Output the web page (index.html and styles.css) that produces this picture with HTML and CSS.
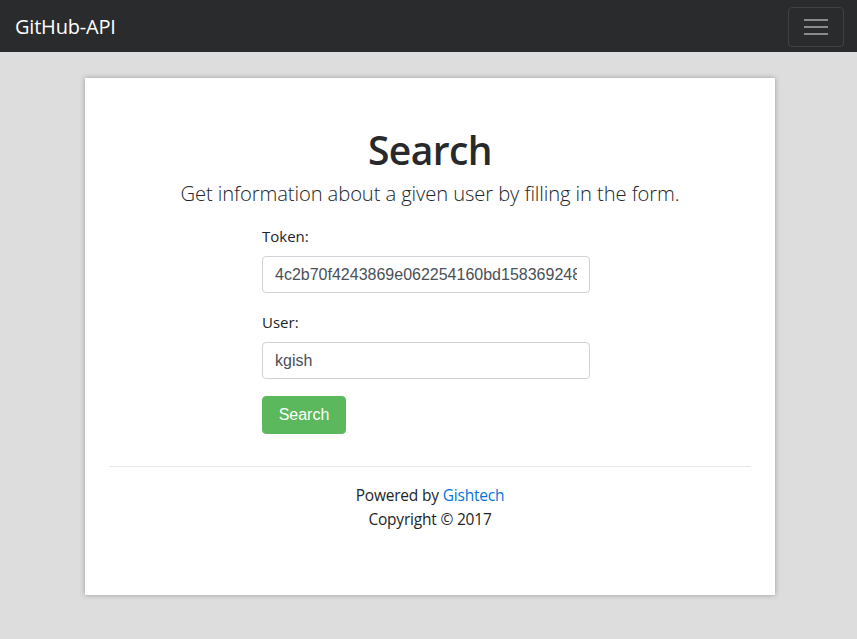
FILE: index.html
```html
<!DOCTYPE html>
<html>
<head>
<meta charset="utf-8">
<link rel="stylesheet" href="styles.css">
</head>
<body>
<nav class="navbar">
  <span class="brand">GitHub-API</span>
  <button class="toggler" type="button"><span class="bar"></span><span class="bar"></span><span class="bar"></span></button>
</nav>
<main class="card">
  <h1 class="title">Search</h1>
  <p class="lead">Get information about a given user by filling in the form.</p>
  <form class="form">
    <label class="label">Token:</label>
    <input class="input" type="text" value="4c2b70f4243869e062254160bd15836924812345">
    <label class="label">User:</label>
    <input class="input" type="text" value="kgish">
    <button class="btn" type="button">Search</button>
  </form>
  <hr class="rule">
  <footer class="footer">
    <div>Powered by <a class="link" href="#">Gishtech</a></div>
    <div>Copyright © 2017</div>
  </footer>
</main>
</body>
</html>
```
FILE: styles.css
```css
html, body {
  margin: 0;
  padding: 0;
  background: #dddddd;
  font-family: "Open Sans", "Noto Sans", sans-serif;
  color: #212529;
  height: 639px;
  overflow: hidden;
}
.navbar {
  height: 52px;
  background: #2a2b2d;
  display: flex;
  align-items: center;
  justify-content: space-between;
  padding: 0 13px 0 16px;
  box-sizing: border-box;
}
.brand {
  color: #ffffff;
  font-size: 20px;
  letter-spacing: -0.2px;
  margin-left: -1px;
}
.toggler {
  width: 56px;
  height: 40px;
  background: transparent;
  border: 1px solid rgba(255,255,255,0.1);
  border-radius: 4px;
  display: flex;
  flex-direction: column;
  align-items: center;
  justify-content: center;
  gap: 5px;
  padding: 0;
  margin-top: 1px;
}
.bar {
  display: block;
  width: 24px;
  height: 2px;
  background: #8a8b8c;
}
.card {
  width: 690px;
  height: 517px;
  margin: 26px 0 0 85px;
  background: #ffffff;
  box-shadow: 0 0 5px rgba(0,0,0,0.3);
  box-sizing: border-box;
  padding: 24px 24px 0;
  display: flex;
  flex-direction: column;
}
.title {
  margin: 20px 0 0;
  text-align: center;
  font-size: 39px;
  font-weight: 600;
  line-height: 56px;
  letter-spacing: -0.6px;
  color: #27292b;
}
.lead {
  margin: 0;
  text-align: center;
  font-size: 20.2px;
  font-weight: 300;
  line-height: 30px;
  letter-spacing: -0.1px;
}
.form {
  display: flex;
  flex-direction: column;
  width: 328px;
  margin: 16px 0 0 153px;
}
.label {
  font-size: 15px;
  line-height: 24px;
  margin-bottom: 8px;
}
.input {
  height: 37px;
  box-sizing: border-box;
  border: 1px solid #cfd2d6;
  border-radius: 4px;
  padding: 6px 12px;
  font-family: "Liberation Sans", Arial, sans-serif;
  font-size: 16px;
  color: #495057;
  margin-bottom: 17px;
  outline: none;
}
.btn {
  align-self: flex-start;
  width: 84px;
  height: 38px;
  background: #5cb85c;
  border: 1px solid #5cb85c;
  border-radius: 4px;
  color: #ffffff;
  font-family: "Liberation Sans", Arial, sans-serif;
  font-size: 16px;
  padding: 0;
}
.rule {
  margin: 32px 0 0;
  border: 0;
  border-top: 1px solid #e5e5e5;
}
.footer {
  margin-top: 16px;
  text-align: center;
  font-size: 15.5px;
  line-height: 24px;
  letter-spacing: -0.2px;
}
.link {
  color: #0275d8;
  text-decoration: none;
}
```
